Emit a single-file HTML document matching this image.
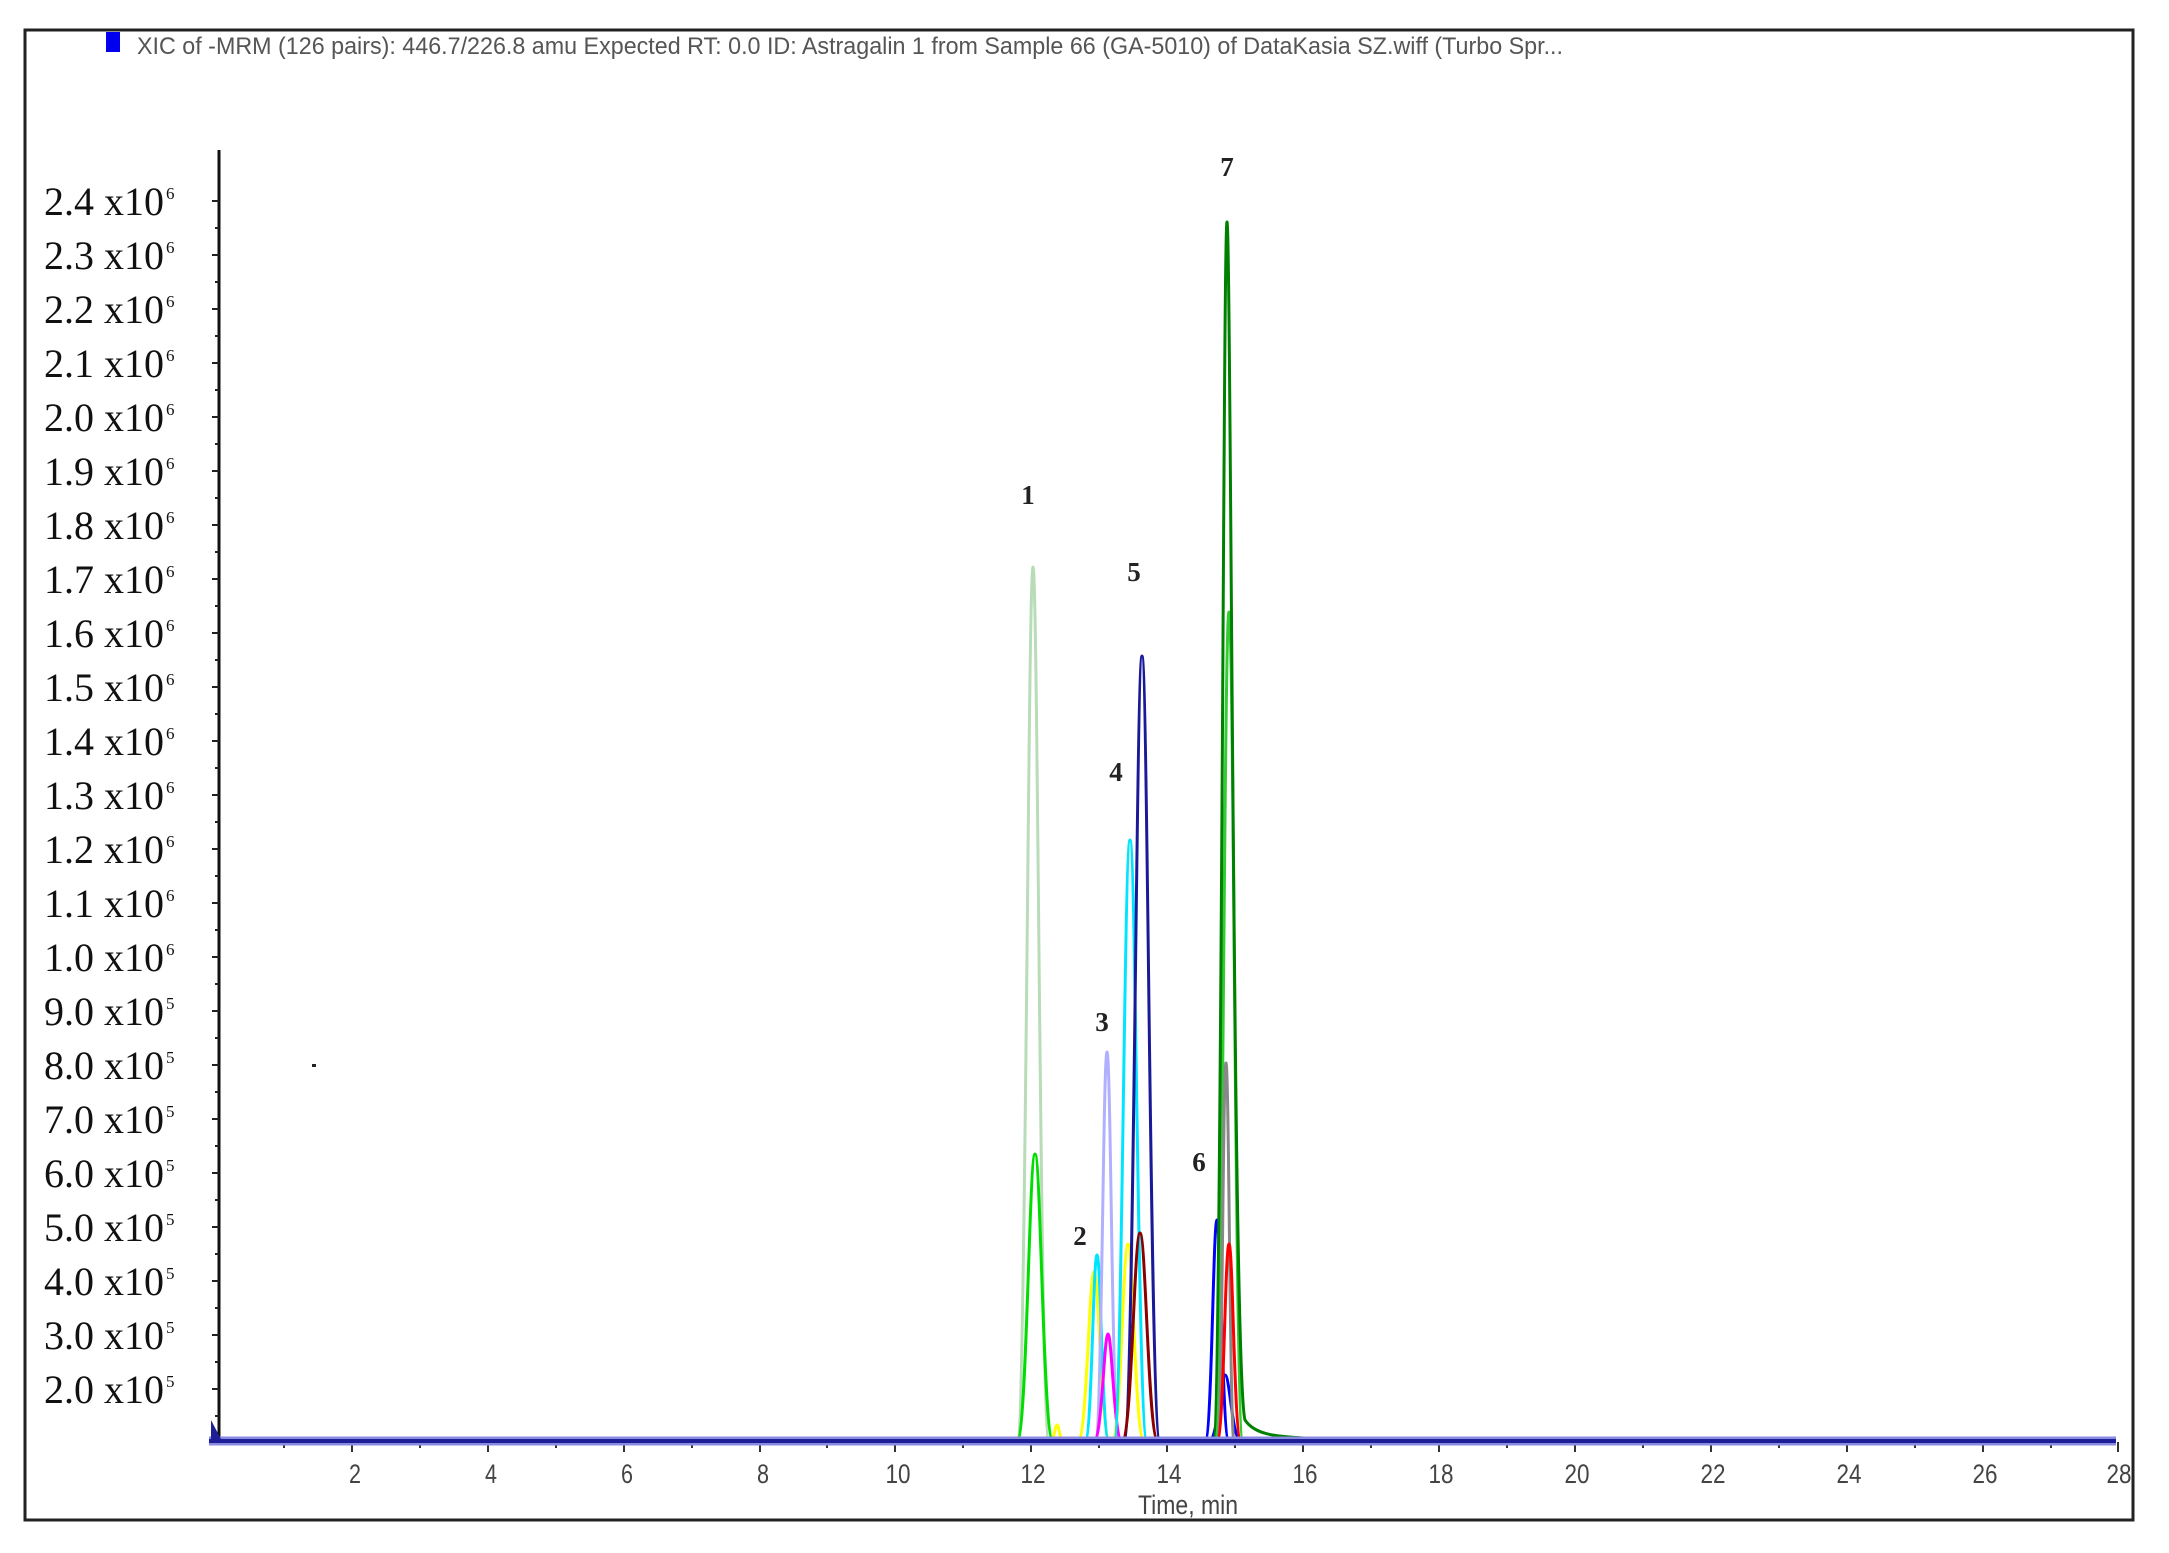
<!DOCTYPE html>
<html><head><meta charset="utf-8"><style>
html,body{margin:0;padding:0;background:#fff;}
svg{display:block;}
</style></head><body>
<svg width="2169" height="1553" viewBox="0 0 2169 1553" xmlns="http://www.w3.org/2000/svg">
<rect x="0" y="0" width="2169" height="1553" fill="#fff"/>
<rect x="25" y="30" width="2108" height="1490" fill="none" stroke="#222" stroke-width="3"/>
<rect x="106" y="32" width="14" height="20" fill="#0000ee"/>
<text x="137" y="54" font-family="Liberation Sans, sans-serif" font-size="24" fill="#555" textLength="1426" lengthAdjust="spacingAndGlyphs">XIC of -MRM (126 pairs): 446.7/226.8 amu Expected RT: 0.0 ID: Astragalin 1 from Sample 66 (GA-5010) of DataKasia SZ.wiff (Turbo Spr...</text>
<!-- y axis -->
<line x1="219" y1="150" x2="219" y2="1442" stroke="#111" stroke-width="3"/>
<g font-family="Liberation Serif, serif" fill="#111">
<g font-size="40">
<text x="44" y="215" textLength="120" lengthAdjust="spacingAndGlyphs">2.4 x10</text>
<text x="44" y="269" textLength="120" lengthAdjust="spacingAndGlyphs">2.3 x10</text>
<text x="44" y="323" textLength="120" lengthAdjust="spacingAndGlyphs">2.2 x10</text>
<text x="44" y="377" textLength="120" lengthAdjust="spacingAndGlyphs">2.1 x10</text>
<text x="44" y="431" textLength="120" lengthAdjust="spacingAndGlyphs">2.0 x10</text>
<text x="44" y="485" textLength="120" lengthAdjust="spacingAndGlyphs">1.9 x10</text>
<text x="44" y="539" textLength="120" lengthAdjust="spacingAndGlyphs">1.8 x10</text>
<text x="44" y="593" textLength="120" lengthAdjust="spacingAndGlyphs">1.7 x10</text>
<text x="44" y="647" textLength="120" lengthAdjust="spacingAndGlyphs">1.6 x10</text>
<text x="44" y="701" textLength="120" lengthAdjust="spacingAndGlyphs">1.5 x10</text>
<text x="44" y="755" textLength="120" lengthAdjust="spacingAndGlyphs">1.4 x10</text>
<text x="44" y="809" textLength="120" lengthAdjust="spacingAndGlyphs">1.3 x10</text>
<text x="44" y="863" textLength="120" lengthAdjust="spacingAndGlyphs">1.2 x10</text>
<text x="44" y="917" textLength="120" lengthAdjust="spacingAndGlyphs">1.1 x10</text>
<text x="44" y="971" textLength="120" lengthAdjust="spacingAndGlyphs">1.0 x10</text>
<text x="44" y="1025" textLength="120" lengthAdjust="spacingAndGlyphs">9.0 x10</text>
<text x="44" y="1079" textLength="120" lengthAdjust="spacingAndGlyphs">8.0 x10</text>
<text x="44" y="1133" textLength="120" lengthAdjust="spacingAndGlyphs">7.0 x10</text>
<text x="44" y="1187" textLength="120" lengthAdjust="spacingAndGlyphs">6.0 x10</text>
<text x="44" y="1241" textLength="120" lengthAdjust="spacingAndGlyphs">5.0 x10</text>
<text x="44" y="1295" textLength="120" lengthAdjust="spacingAndGlyphs">4.0 x10</text>
<text x="44" y="1349" textLength="120" lengthAdjust="spacingAndGlyphs">3.0 x10</text>
<text x="44" y="1403" textLength="120" lengthAdjust="spacingAndGlyphs">2.0 x10</text>
</g>
<g font-size="17">
<text x="166" y="199">6</text><text x="166" y="253">6</text><text x="166" y="307">6</text><text x="166" y="361">6</text>
<text x="166" y="415">6</text><text x="166" y="469">6</text><text x="166" y="523">6</text><text x="166" y="577">6</text>
<text x="166" y="631">6</text><text x="166" y="685">6</text><text x="166" y="739">6</text><text x="166" y="793">6</text>
<text x="166" y="847">6</text><text x="166" y="901">6</text><text x="166" y="955">6</text>
<text x="166" y="1009">5</text><text x="166" y="1063">5</text><text x="166" y="1117">5</text><text x="166" y="1171">5</text>
<text x="166" y="1225">5</text><text x="166" y="1279">5</text><text x="166" y="1333">5</text><text x="166" y="1387">5</text>
</g>
</g>
<g stroke="#222" stroke-width="2">
<path d="M212 201h7M212 255h7M212 309h7M212 363h7M212 417h7M212 471h7M212 525h7M212 579h7M212 633h7M212 687h7M212 741h7M212 795h7M212 849h7M212 903h7M212 957h7M212 1011h7M212 1065h7M212 1119h7M212 1173h7M212 1227h7M212 1281h7M212 1335h7M212 1389h7"/>
<path d="M215 228h4M215 282h4M215 336h4M215 390h4M215 444h4M215 498h4M215 552h4M215 606h4M215 660h4M215 714h4M215 768h4M215 822h4M215 876h4M215 930h4M215 984h4M215 1038h4M215 1092h4M215 1146h4M215 1200h4M215 1254h4M215 1308h4M215 1362h4M215 1416h4"/>
</g>
<!-- x axis ticks -->
<g stroke="#333" stroke-width="2">
<path d="M284 1442v6M352 1442v10M420 1442v6M488 1442v10M556 1442v6M624 1442v10M692 1442v6M760 1442v10M827 1442v6M895 1442v10M963 1442v6M1031 1442v10M1099 1442v6M1167 1442v10M1235 1442v6M1303 1442v10M1371 1442v6M1439 1442v10M1507 1442v6M1575 1442v10M1643 1442v6M1711 1442v10M1779 1442v6M1847 1442v10M1915 1442v6M1983 1442v10M2051 1442v6M2118 1442v10"/>
</g>
<g font-family="Liberation Sans, sans-serif" font-size="27" fill="#444" text-anchor="middle">
<text x="355" y="1483" textLength="12" lengthAdjust="spacingAndGlyphs">2</text>
<text x="491" y="1483" textLength="12" lengthAdjust="spacingAndGlyphs">4</text>
<text x="627" y="1483" textLength="12" lengthAdjust="spacingAndGlyphs">6</text>
<text x="763" y="1483" textLength="12" lengthAdjust="spacingAndGlyphs">8</text>
<text x="898" y="1483" textLength="25" lengthAdjust="spacingAndGlyphs">10</text>
<text x="1033" y="1483" textLength="25" lengthAdjust="spacingAndGlyphs">12</text>
<text x="1169" y="1483" textLength="25" lengthAdjust="spacingAndGlyphs">14</text>
<text x="1305" y="1483" textLength="25" lengthAdjust="spacingAndGlyphs">16</text>
<text x="1441" y="1483" textLength="25" lengthAdjust="spacingAndGlyphs">18</text>
<text x="1577" y="1483" textLength="25" lengthAdjust="spacingAndGlyphs">20</text>
<text x="1713" y="1483" textLength="25" lengthAdjust="spacingAndGlyphs">22</text>
<text x="1849" y="1483" textLength="25" lengthAdjust="spacingAndGlyphs">24</text>
<text x="1985" y="1483" textLength="25" lengthAdjust="spacingAndGlyphs">26</text>
<text x="2119" y="1483" textLength="25" lengthAdjust="spacingAndGlyphs">28</text>
<text x="1188" y="1514" textLength="100" lengthAdjust="spacingAndGlyphs">Time, min</text>
</g>
<!-- peaks -->
<g fill="none" stroke-width="3" stroke-linejoin="round" transform="translate(-5,0)">
<path d="M1022 1441 C1031 1441 1033 567 1038 567 C1043 567 1045 1441 1054 1441" stroke="#b8dcb8"/>
<path d="M1022 1441 C1032 1441 1034 1154 1040 1154 C1046 1154 1048 1441 1058 1441" stroke="#00dd00"/>
<path d="M1056 1441 C1059 1441 1060 1425 1062 1425 C1064 1425 1065 1441 1068 1441" stroke="#ffff00"/>
<path d="M1083 1441 C1092 1441 1094 1272 1099 1272 C1104 1272 1106 1441 1115 1441" stroke="#ffff00"/>
<path d="M1090 1441 C1097 1441 1098 1255 1102 1255 C1106 1255 1107 1441 1114 1441" stroke="#00e5ff"/>
<path d="M1100 1441 C1107 1441 1108 1052 1112 1052 C1116 1052 1117 1441 1124 1441" stroke="#b0b0ff"/>
<path d="M1099 1441 C1107 1441 1109 1334 1113 1334 C1117 1334 1119 1441 1127 1441" stroke="#ff00ff"/>
<path d="M1117 1441 C1126 1441 1128 1244 1133 1244 C1138 1244 1140 1441 1149 1441" stroke="#ffff00"/>
<path d="M1119 1441 C1127 1441 1129 840 1135 840 C1141 840 1143 1441 1152 1441" stroke="#00e5ff"/>
<path d="M1129 1441 C1139 1441 1141 656 1147 656 C1153 656 1155 1441 1165 1441" stroke="#1a1a99"/>
<path d="M1127 1441 C1137 1441 1139 1233 1145 1233 C1151 1233 1153 1441 1163 1441" stroke="#8b0000"/>
<path d="M1210 1441 C1217 1441 1218 1220 1222 1220 C1226 1220 1227 1441 1234 1441" stroke="#0000ff"/>
<path d="M1214 1441 C1223 1441 1225 1375 1230 1375 C1235 1375 1237 1441 1246 1441" stroke="#0000ff"/>
<path d="M1220 1441 C1228 1441 1229 612 1234 612 C1239 612 1240 1441 1248 1441" stroke="#33cc33"/>
<path d="M1223 1441 C1227 1441 1228 1063 1231 1063 C1234 1063 1235 1441 1239 1441" stroke="#888"/>
<path d="M1222 1441 C1229 1441 1230 1244 1234 1244 C1238 1244 1239 1441 1246 1441" stroke="#ff0000"/>
<path d="M1218 1441 C1227 1441 1228 222 1232 222 C1236 222 1238 1380 1250 1420 C1262 1438 1290 1436 1320 1439" stroke="#008000"/>
<path d="M1320 1439 L1400 1439" stroke="#2e8b2e" stroke-width="2"/>
</g>
<!-- baseline -->
<line x1="209" y1="1441" x2="2116" y2="1441" stroke="#8a8ae0" stroke-width="9"/>
<line x1="209" y1="1441" x2="2116" y2="1441" stroke="#1e1e96" stroke-width="4"/>
<path d="M211 1420 L211 1441 L222 1441 Z" fill="#1e1e96"/>
<rect x="312" y="1064" width="4" height="3" fill="#222"/>
<!-- peak labels -->
<g font-family="Liberation Serif, serif" font-weight="bold" font-size="27" fill="#222" text-anchor="middle">
<text x="1028" y="504">1</text>
<text x="1080" y="1245">2</text>
<text x="1102" y="1031">3</text>
<text x="1116" y="781">4</text>
<text x="1134" y="581">5</text>
<text x="1199" y="1171">6</text>
<text x="1227" y="176">7</text>
</g>
</svg>
</body></html>
